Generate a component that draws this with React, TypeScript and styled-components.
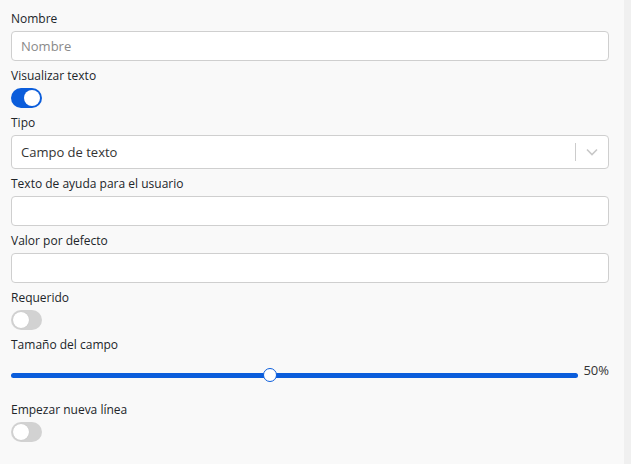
import React, { FC } from 'react';
import styled, { createGlobalStyle } from 'styled-components';

const GlobalStyle = createGlobalStyle`
  html, body {
    margin: 0;
    padding: 0;
    background: #f9f9f9;
  }
  body {
    font-family: 'Open Sans', 'Liberation Sans', sans-serif;
  }
`;

const Page = styled.div`
  display: flex;
  width: 631px;
  height: 464px;
  overflow: hidden;
`;

const Form = styled.div`
  width: 624px;
  padding: 10px 15px 0 11px;
  box-sizing: border-box;
  background: #f9f9f9;
`;

const ScrollStrip = styled.div`
  width: 7px;
  background: #f0f0f0;
`;

const Field = styled.div`
  display: flex;
  flex-direction: column;
  align-items: flex-start;
  margin-bottom: 6px;
`;

const Label = styled.label`
  font-size: 12px;
  line-height: 17px;
  color: #212529;
  margin-bottom: 4px;
`;

const TextInput = styled.input`
  width: 100%;
  height: 30px;
  box-sizing: border-box;
  border: 1px solid #cfcfcf;
  border-radius: 4px;
  background: #fff;
  padding: 0 9px;
  font-family: 'Open Sans', 'Liberation Sans', sans-serif;
  font-size: 13px;
  color: #333;
  outline: none;

  &::placeholder {
    color: #8a8a8a;
  }
`;

const SelectBox = styled.div`
  width: 100%;
  height: 34px;
  box-sizing: border-box;
  border: 1px solid #cfcfcf;
  border-radius: 4px;
  background: #fff;
  display: flex;
  align-items: center;
`;

const SelectValue = styled.span`
  flex: 1;
  padding-left: 9px;
  font-size: 13px;
  color: #333;
`;

const SelectDivider = styled.span`
  width: 1px;
  height: 18px;
  background: #cccccc;
`;

const SelectArrow = styled.span`
  width: 32px;
  display: flex;
  align-items: center;
  justify-content: center;
`;

const Track = styled.span<{ on?: boolean }>`
  position: relative;
  display: block;
  width: 31px;
  height: 20px;
  border-radius: 10px;
  background: ${p => (p.on ? '#0b5ddb' : '#d2d2d2')};
`;

const Knob = styled.span<{ on?: boolean }>`
  position: absolute;
  top: 2px;
  left: ${p => (p.on ? '13px' : '2px')};
  width: 16px;
  height: 16px;
  border-radius: 50%;
  background: #fff;
  box-shadow: ${p => (p.on ? 'none' : '0 0 1px rgba(0,0,0,0.15)')};
`;

const SliderRow = styled.div`
  display: flex;
  align-items: flex-start;
  width: 100%;
  height: 38px;
`;

const SliderTrack = styled.div`
  position: relative;
  flex: 1;
  height: 5px;
  margin-top: 16px;
  border-radius: 3px;
  background: #0b5ddb;
`;

const SliderThumb = styled.span`
  position: absolute;
  top: -5px;
  width: 12px;
  height: 12px;
  margin-left: -7px;
  border: 1.5px solid #0b5ddb;
  border-radius: 50%;
  background: #fff;
`;

const SliderValue = styled.span`
  margin: 4px 0 0 5px;
  font-size: 13px;
  line-height: 18px;
  color: #333;
`;

const Toggle: FC<{ on?: boolean }> = ({ on }) => (
  <Track on={on}>
    <Knob on={on} />
  </Track>
);

export default function App() {
  const value = 50;
  const thumbLeft = 45.7;

  return (
    <>
      <GlobalStyle />
      <Page>
        <Form>
          <Field>
            <Label>Nombre</Label>
            <TextInput placeholder="Nombre" />
          </Field>
          <Field>
            <Label>Visualizar texto</Label>
            <Toggle on />
          </Field>
          <Field>
            <Label>Tipo</Label>
            <SelectBox>
              <SelectValue>Campo de texto</SelectValue>
              <SelectDivider />
              <SelectArrow>
                <svg width="12" height="8" viewBox="0 0 12 8" fill="none">
                  <path d="M1 1.5l5 5 5-5" stroke="#c8c8c8" strokeWidth="1.6" />
                </svg>
              </SelectArrow>
            </SelectBox>
          </Field>
          <Field>
            <Label>Texto de ayuda para el usuario</Label>
            <TextInput />
          </Field>
          <Field>
            <Label>Valor por defecto</Label>
            <TextInput />
          </Field>
          <Field>
            <Label>Requerido</Label>
            <Toggle />
          </Field>
          <Field>
            <Label>Tamaño del campo</Label>
            <SliderRow>
              <SliderTrack>
                <SliderThumb style={{ left: `${thumbLeft}%` }} />
              </SliderTrack>
              <SliderValue>{value}%</SliderValue>
            </SliderRow>
          </Field>
          <Field>
            <Label>Empezar nueva línea</Label>
            <Toggle />
          </Field>
        </Form>
        <ScrollStrip />
      </Page>
    </>
  );
}
